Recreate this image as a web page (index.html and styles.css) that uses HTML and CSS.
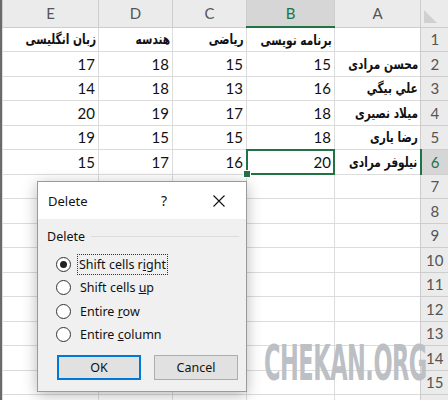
FILE: index.html
```html
<!DOCTYPE html>
<html lang="fa">
<head>
    <meta charset="UTF-8">
    <meta name="viewport" content="width=device-width, initial-scale=1.0">
    <title>Delete cells</title>
    <link rel="stylesheet" href="styles.css">
</head>
<body>
    <div class="sheet">
        <table class="grid" dir="rtl">
            <colgroup>
                <col class="col-hdr">
                <col class="col-a">
                <col class="col-b">
                <col class="col-c">
                <col class="col-d">
                <col class="col-e">
            </colgroup>
            <tr class="heads">
                <th class="corner"><span class="tri"></span></th>
                <th>A</th>
                <th class="active">B</th>
                <th>C</th>
                <th>D</th>
                <th>E</th>
            </tr>
            <tr>
                <th class="row-no">1</th>
                <td></td>
                <td class="fa"><span>برنامه نویسی</span></td>
                <td class="fa"><span>ریاضی</span></td>
                <td class="fa"><span>هندسه</span></td>
                <td class="fa"><span>زبان انگلیسی</span></td>
            </tr>
            <tr>
                <th class="row-no">2</th>
                <td class="fa"><span>محسن مرادی</span></td>
                <td>15</td><td>15</td><td>18</td><td>17</td>
            </tr>
            <tr>
                <th class="row-no">3</th>
                <td class="fa"><span>علي بيگي</span></td>
                <td>16</td><td>13</td><td>18</td><td>14</td>
            </tr>
            <tr>
                <th class="row-no">4</th>
                <td class="fa"><span>میلاد نصیری</span></td>
                <td>18</td><td>17</td><td>19</td><td>20</td>
            </tr>
            <tr>
                <th class="row-no">5</th>
                <td class="fa"><span>رضا یاری</span></td>
                <td>18</td><td>15</td><td>15</td><td>19</td>
            </tr>
            <tr>
                <th class="row-no active">6</th>
                <td class="fa"><span>نیلوفر مرادی</span></td>
                <td class="selected">20<i class="handle"></i></td><td>16</td><td>17</td><td>15</td>
            </tr>
            <tr><th class="row-no">7</th><td></td><td></td><td></td><td></td><td></td></tr>
            <tr><th class="row-no">8</th><td></td><td></td><td></td><td></td><td></td></tr>
            <tr><th class="row-no">9</th><td></td><td></td><td></td><td></td><td></td></tr>
            <tr><th class="row-no">10</th><td></td><td></td><td></td><td></td><td></td></tr>
            <tr><th class="row-no">11</th><td></td><td></td><td></td><td></td><td></td></tr>
            <tr><th class="row-no">12</th><td></td><td></td><td></td><td></td><td></td></tr>
            <tr><th class="row-no">13</th><td></td><td></td><td></td><td></td><td></td></tr>
            <tr><th class="row-no">14</th><td></td><td></td><td></td><td></td><td></td></tr>
            <tr><th class="row-no">15</th><td></td><td></td><td></td><td></td><td></td></tr>
            <tr><th class="row-no"></th><td></td><td></td><td></td><td></td><td></td></tr>
        </table>

        <div class="watermark">CHEKAN.ORG</div>

        <div class="dialog">
            <div class="title-bar">
                <span class="title">Delete</span>
                <span class="help">?</span>
                <svg class="close" width="12" height="12" viewBox="0 0 12 12">
                    <path d="M0.5 0.5 L11.5 11.5 M11.5 0.5 L0.5 11.5" stroke="#111" stroke-width="1.1" fill="none"/>
                </svg>
            </div>
            <div class="dialog-body">
                <div class="group-label"><span>Delete</span><span class="rule"></span></div>
                <div class="options">
                    <div class="option"><span class="radio checked"></span><span class="focus">Shift cells r<u>i</u>ght</span></div>
                    <div class="option"><span class="radio"></span><span>Shift cells <u>u</u>p</span></div>
                    <div class="option"><span class="radio"></span><span>Entire <u>r</u>ow</span></div>
                    <div class="option"><span class="radio"></span><span>Entire <u>c</u>olumn</span></div>
                </div>
                <div class="buttons">
                    <button class="btn default">OK</button>
                    <button class="btn">Cancel</button>
                </div>
            </div>
        </div>
    </div>
</body>
</html>
```

FILE: styles.css
```css
body {
    margin: 0;
    background-color: #fff;
    font-family: "Lato", "DejaVu Sans", sans-serif;
    overflow: hidden;
}
.sheet {
    position: relative;
    width: 446px;
    height: 400px;
    overflow: hidden;
    border-left: 2px solid #6a6a6a;
}
.grid {
    width: 446px;
    table-layout: fixed;
    border-collapse: collapse;
    font-size: 15px;
    color: #111;
}
.col-hdr { width: 28px; }
.col-a { width: 86px; }
.col-b { width: 88px; }
.col-c { width: 74px; }
.col-d { width: 74px; }
.col-e { width: 96px; }

.grid tr {
    height: 24.5px;
}
.grid tr.heads {
    height: 27px;
}
.grid td {
    border: 1px solid #dcdcdc;
    padding: 0 3px;
    text-align: right;
    white-space: nowrap;
    overflow: hidden;
    vertical-align: middle;
}
.grid td.fa {
    font-family: "DejaVu Sans Condensed", "DejaVu Sans", sans-serif;
    font-weight: bold;
    font-size: 14px;
    padding: 0 2px;
}
.fa span {
    display: inline-block;
    transform: scaleX(0.84);
    transform-origin: right center;
}
.heads th {
    background-color: #ebebeb;
    color: #555;
    font-weight: normal;
    font-size: 15px;
    border: 1px solid #cdcdcd;
    border-top: none;
}
.heads th.active {
    background-color: #d6d6d6;
    color: #217346;
    border-bottom: 2px solid #217346;
}
.corner {
    position: relative;
}
.tri {
    position: absolute;
    left: 3px;
    bottom: 4px;
    width: 0;
    height: 0;
    border-bottom: 13px solid #d0d0d0;
    border-right: 13px solid transparent;
}
.row-no {
    background-color: #ebebeb;
    color: #555;
    font-weight: normal;
    font-size: 15px;
    border: 1px solid #cdcdcd;
    border-right: none;
}
.row-no.active {
    background-color: #d6d6d6;
    color: #217346;
    border-left: 2px solid #217346;
}
.grid td.selected {
    position: relative;
    overflow: visible;
}
.selected::after {
    content: "";
    position: absolute;
    top: -1px;
    left: -1px;
    right: -1px;
    bottom: -1px;
    border: 2px solid #217346;
}
.handle {
    position: absolute;
    left: -4px;
    bottom: -4px;
    width: 6px;
    height: 6px;
    background-color: #217346;
    border: 1px solid #fff;
    z-index: 2;
}

.watermark {
    position: absolute;
    left: 262px;
    top: 334px;
    font-family: "DejaVu Sans Condensed", "DejaVu Sans", sans-serif;
    font-weight: bold;
    font-size: 50px;
    letter-spacing: -1px;
    color: #bcc0c4;
    transform: scaleX(0.5);
    transform-origin: left top;
    white-space: nowrap;
}

.dialog {
    position: absolute;
    left: 35px;
    top: 181px;
    width: 208px;
    height: 209px;
    background-color: #f0f0f0;
    border: 1px solid #9a9a9a;
    box-shadow: 0 3px 14px rgba(0,0,0,0.28);
    font-family: "Noto Sans", sans-serif;
    font-size: 12.5px;
    color: #111;
}
.title-bar {
    height: 37px;
    background-color: #fff;
    display: flex;
    align-items: center;
    padding-left: 10px;
    font-size: 13px;
}
.title {
    flex: 1;
}
.help {
    width: 12px;
    margin-right: 40px;
    font-size: 14px;
}
.close {
    margin-right: 21px;
}
.dialog-body {
    padding: 10px 7px 0 9px;
}
.group-label {
    display: flex;
    align-items: center;
    height: 14px;
}
.group-label .rule {
    flex: 1;
    height: 1px;
    background-color: #dcdcdc;
    margin-left: 6px;
}
.options {
    margin-top: 10px;
    padding-left: 9px;
}
.option {
    display: flex;
    align-items: center;
    height: 23.3px;
}
.radio {
    width: 13px;
    height: 13px;
    border: 1px solid #333;
    border-radius: 50%;
    background-color: #fff;
    margin-right: 9px;
    position: relative;
}
.radio.checked::after {
    content: "";
    position: absolute;
    left: 3px;
    top: 3px;
    width: 7px;
    height: 7px;
    border-radius: 50%;
    background-color: #222;
}
.focus {
    outline: 1px dotted #333;
    padding: 1px 1px;
    margin-left: -2px;
}
.buttons {
    display: flex;
    gap: 13px;
    margin-top: 9px;
    padding-left: 10px;
}
.btn {
    width: 84px;
    height: 25px;
    background-color: #e1e1e1;
    border: 1px solid #adadad;
    font-family: "Noto Sans", sans-serif;
    font-size: 12.5px;
    color: #111;
    padding: 0;
}
.btn.default {
    border: 2px solid #0078d7;
}
```
